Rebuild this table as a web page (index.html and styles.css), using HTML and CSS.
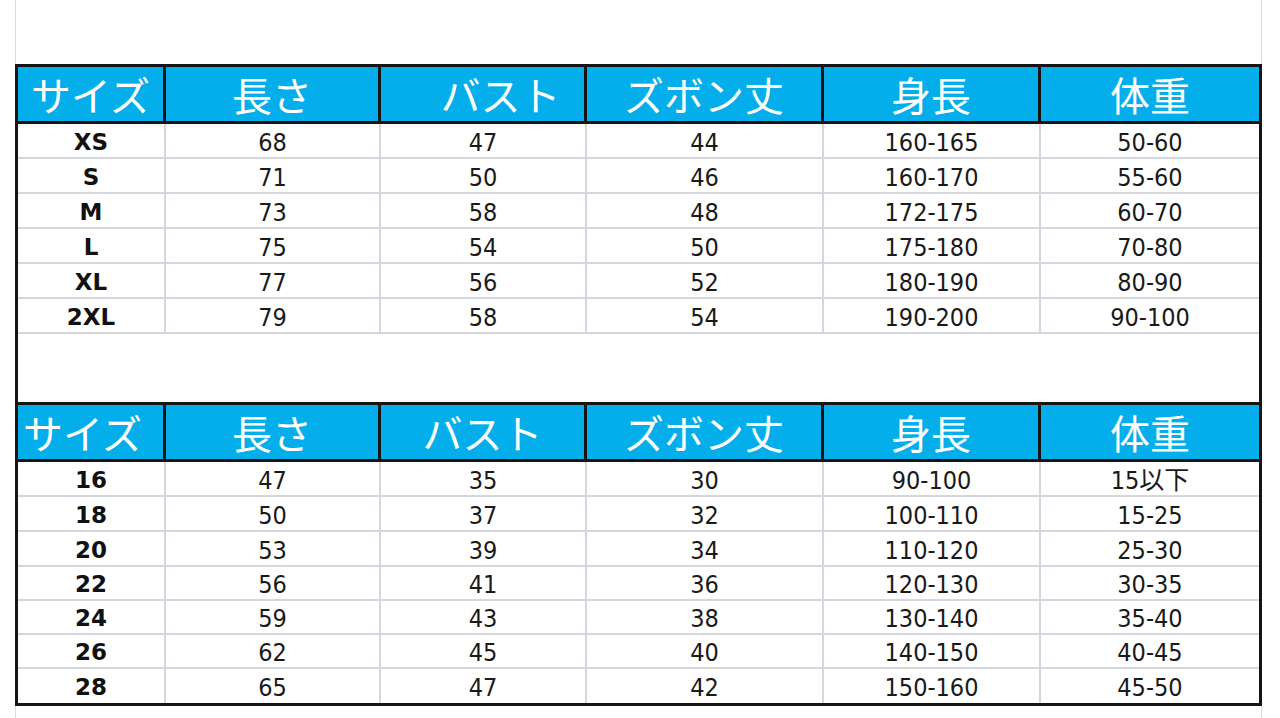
FILE: index.html
```html
<!DOCTYPE html>
<html lang="ja">
<head>
<meta charset="utf-8">
<title>サイズ表</title>
<link rel="stylesheet" href="styles.css">
</head>
<body>
<div class="page">
  <div class="box">
    <div class="grid grid-a">
      <div class="th">サイズ</div>
      <div class="th">長さ</div>
      <div class="th shift-r">バスト</div>
      <div class="th">ズボン丈</div>
      <div class="th">身長</div>
      <div class="th">体重</div>

      <div class="td b">XS</div><div class="td">68</div><div class="td">47</div><div class="td">44</div><div class="td">160-165</div><div class="td">50-60</div>
      <div class="td b">S</div><div class="td">71</div><div class="td">50</div><div class="td">46</div><div class="td">160-170</div><div class="td">55-60</div>
      <div class="td b">M</div><div class="td">73</div><div class="td">58</div><div class="td">48</div><div class="td">172-175</div><div class="td">60-70</div>
      <div class="td b">L</div><div class="td">75</div><div class="td">54</div><div class="td">50</div><div class="td">175-180</div><div class="td">70-80</div>
      <div class="td b">XL</div><div class="td">77</div><div class="td">56</div><div class="td">52</div><div class="td">180-190</div><div class="td">80-90</div>
      <div class="td b">2XL</div><div class="td">79</div><div class="td">58</div><div class="td">54</div><div class="td">190-200</div><div class="td">90-100</div>
    </div>

    <div class="gap"></div>

    <div class="grid grid-b">
      <div class="th top shift-l">サイズ</div>
      <div class="th top">長さ</div>
      <div class="th top">バスト</div>
      <div class="th top">ズボン丈</div>
      <div class="th top">身長</div>
      <div class="th top">体重</div>

      <div class="td b">16</div><div class="td">47</div><div class="td">35</div><div class="td">30</div><div class="td">90-100</div><div class="td">15以下</div>
      <div class="td b">18</div><div class="td">50</div><div class="td">37</div><div class="td">32</div><div class="td">100-110</div><div class="td">15-25</div>
      <div class="td b">20</div><div class="td">53</div><div class="td">39</div><div class="td">34</div><div class="td">110-120</div><div class="td">25-30</div>
      <div class="td b">22</div><div class="td">56</div><div class="td">41</div><div class="td">36</div><div class="td">120-130</div><div class="td">30-35</div>
      <div class="td b">24</div><div class="td">59</div><div class="td">43</div><div class="td">38</div><div class="td">130-140</div><div class="td">35-40</div>
      <div class="td b">26</div><div class="td">62</div><div class="td">45</div><div class="td">40</div><div class="td">140-150</div><div class="td">40-45</div>
      <div class="td b last">28</div><div class="td last">65</div><div class="td last">47</div><div class="td last">42</div><div class="td last">150-160</div><div class="td last">45-50</div>
    </div>
  </div>
</div>
</body>
</html>
```

FILE: styles.css
```css
html, body {
  margin: 0;
  padding: 0;
  background: #ffffff;
}

body {
  width: 1280px;
  height: 718px;
  overflow: hidden;
  font-family: "DejaVu Sans", "Noto Sans CJK JP", sans-serif;
}

.page {
  margin-left: 15px;
  width: 1247px;
  height: 718px;
  box-sizing: border-box;
  border-left: 1px solid #dcdcdc;
  border-right: 1px solid #dcdcdc;
  padding-top: 64px;
}

.box {
  margin: 0 -1px;
  border: 3px solid #141414;
  display: flex;
  flex-direction: column;
}

.grid {
  display: grid;
  grid-template-columns: 148px 215px 206px 237px 217px 218px;
}

.grid-a {
  grid-template-rows: 57px repeat(6, 35px);
}

.grid-b {
  grid-template-rows: 60px repeat(3, 35px) repeat(4, 34px);
}

.gap {
  height: 68px;
}

.th {
  box-sizing: border-box;
  background: #03aeea;
  color: #ffffff;
  font-family: "Noto Sans CJK JP", sans-serif;
  font-weight: 400;
  font-size: 40px;
  line-height: 1;
  display: flex;
  align-items: center;
  justify-content: center;
  border-right: 3px solid #141414;
  border-bottom: 3px solid #141414;
  padding-bottom: 1px;
}

.th:nth-child(6) {
  border-right: none;
}

.th.top {
  border-top: 3px solid #141414;
}

.shift-r {
  padding-left: 36px;
}

.shift-l {
  padding-right: 16px;
}

.td {
  box-sizing: border-box;
  display: flex;
  align-items: center;
  justify-content: center;
  font-family: "DejaVu Sans Condensed", "DejaVu Sans", "Noto Sans CJK JP", sans-serif;
  font-stretch: semi-condensed;
  font-size: 25px;
  line-height: 1;
  color: #1a1a1a;
  border-right: 2px solid #d6d6de;
  border-bottom: 2px solid #d6d6de;
  padding-top: 3px;
}

.td:nth-child(6n) {
  border-right: none;
}

.td.b {
  font-family: "DejaVu Sans", sans-serif;
  font-stretch: normal;
  font-weight: bold;
  font-size: 23px;
  color: #111111;
}

.td.last {
  border-bottom: none;
}
```
